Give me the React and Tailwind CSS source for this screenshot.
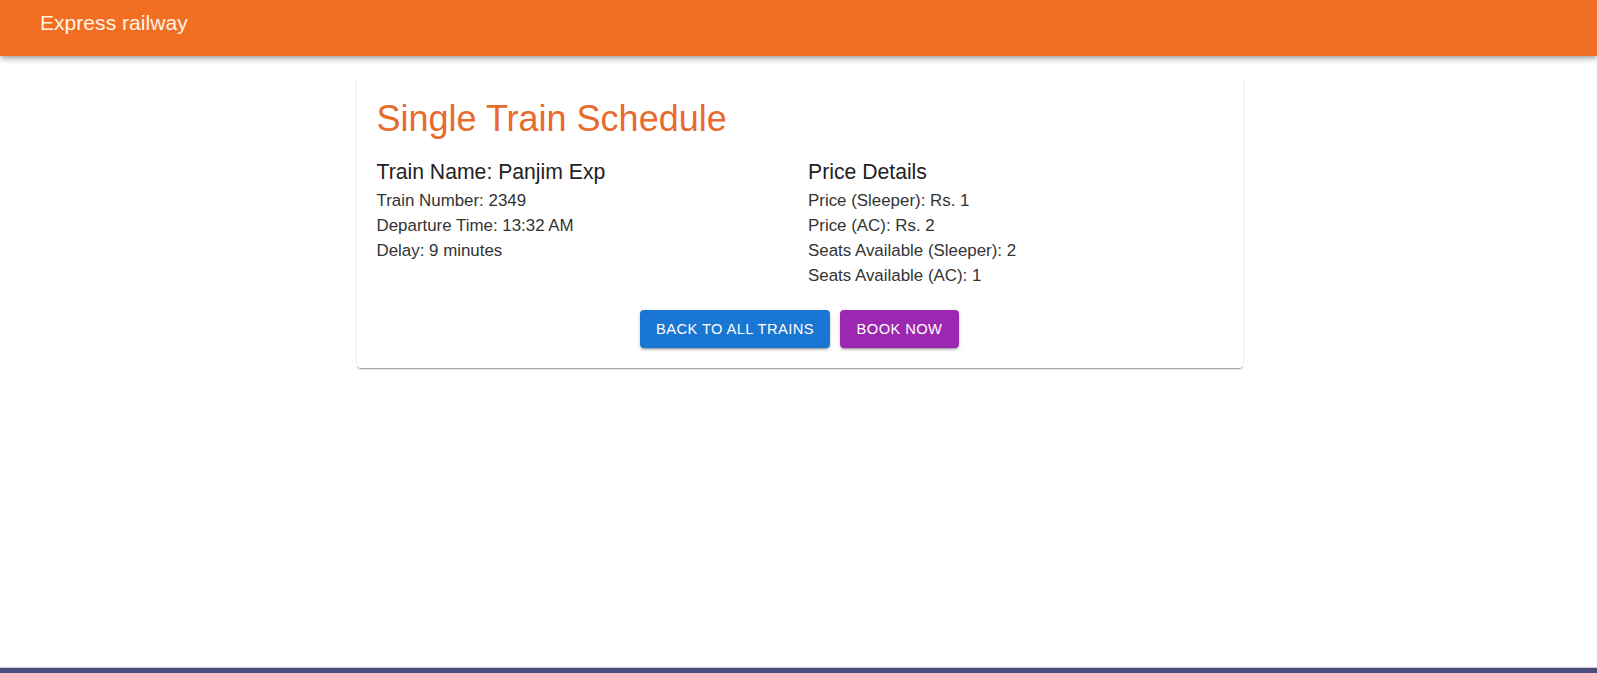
export default function App() {
  const font = { fontFamily: '"Liberation Sans", Arial, sans-serif' };
  return (
    <div style={font} className="flex h-[673px] flex-col overflow-hidden bg-white">
      <header className="relative z-10 h-[56px] shrink-0 bg-[#f26e23] pl-[40px] pt-[6px] shadow-[0_2px_4px_-1px_rgba(0,0,0,0.2),0_4px_5px_0_rgba(0,0,0,0.14),0_1px_10px_0_rgba(0,0,0,0.12)]">
        <div className="text-[21.1px] leading-[33.6px] text-[#fff4e4]">Express railway</div>
      </header>
      <main className="flex-1 pt-[21px]">
        <div className="mx-auto w-[886px] translate-x-[1px] rounded-[4px] bg-white p-[20px] shadow-[0_2px_1px_-1px_rgba(0,0,0,0.2),0_1px_1px_0_rgba(0,0,0,0.14),0_1px_3px_0_rgba(0,0,0,0.12)]">
          <h1 className="text-[36px] leading-[44px] text-[#e86b2e]">Single Train Schedule</h1>
          <div className="mt-[16px] grid grid-cols-2 gap-x-[17px]">
            <div>
              <div className="text-[21.2px] leading-[30.6px] text-[#222]">Train Name: Panjim Exp</div>
              <div className="text-[16.9px] leading-[25px] text-[#333]">
                <p>Train Number: 2349</p>
                <p>Departure Time: 13:32 AM</p>
                <p>Delay: 9 minutes</p>
              </div>
            </div>
            <div>
              <div className="text-[21.2px] leading-[30.6px] text-[#222]">Price Details</div>
              <div className="text-[16.9px] leading-[25px] text-[#333]">
                <p>Price (Sleeper): Rs. 1</p>
                <p>Price (AC): Rs. 2</p>
                <p>Seats Available (Sleeper): 2</p>
                <p>Seats Available (AC): 1</p>
              </div>
            </div>
          </div>
          <div className="mt-[22px] flex justify-center gap-[10px]">
            <button className="h-[38px] w-[190px] rounded-[4px] bg-[#1976d2] text-[14.7px] uppercase tracking-[0.02857em] text-white shadow-[0_3px_1px_-2px_rgba(0,0,0,0.2),0_2px_2px_0_rgba(0,0,0,0.14),0_1px_5px_0_rgba(0,0,0,0.12)]">
              Back to all trains
            </button>
            <button className="h-[38px] w-[119px] rounded-[4px] bg-[#9c27b0] text-[14.7px] uppercase tracking-[0.02857em] text-white shadow-[0_3px_1px_-2px_rgba(0,0,0,0.2),0_2px_2px_0_rgba(0,0,0,0.14),0_1px_5px_0_rgba(0,0,0,0.12)]">
              Book now
            </button>
          </div>
        </div>
      </main>
      <footer className="h-[6px] shrink-0 border-t border-[#c9cbe0] bg-[#4b4e7d]"></footer>
    </div>
  );
}
